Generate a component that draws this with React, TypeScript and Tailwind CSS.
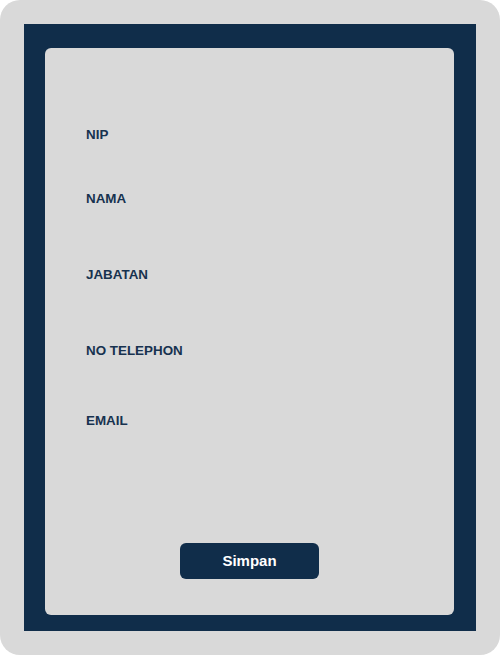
export default function App() {
  const labels = [
    { text: "NIP", mt: "mt-[79px]" },
    { text: "NAMA", mt: "mt-[48px]" },
    { text: "JABATAN", mt: "mt-[60px]" },
    { text: "NO TELEPHON", mt: "mt-[60px]" },
    { text: "EMAIL", mt: "mt-[54px]" },
  ];

  return (
    <div className="w-[500px] h-[655px] bg-[#d9d9d9] rounded-[20px] pt-6 pl-6 pr-6 pb-6 font-['Liberation_Sans',Arial,sans-serif]">
      <div className="h-full bg-[#102d4a] pl-[21px] pt-6 pr-[22px] pb-4">
        <form
          className="h-full bg-[#d9d9d9] rounded-md flex flex-col pl-[41px]"
          onSubmit={(e) => e.preventDefault()}
        >
          {labels.map((l) => (
            <label
              key={l.text}
              className={`${l.mt} block text-[13.4px] leading-4 font-bold text-[#17324f]`}
            >
              {l.text}
            </label>
          ))}
          <div className="mt-auto mb-9 flex justify-center -ml-[41px]">
            <button
              type="submit"
              className="w-[139px] h-[36px] rounded-md bg-[#102d4a] text-white text-[15px] font-bold"
            >
              Simpan
            </button>
          </div>
        </form>
      </div>
    </div>
  );
}
